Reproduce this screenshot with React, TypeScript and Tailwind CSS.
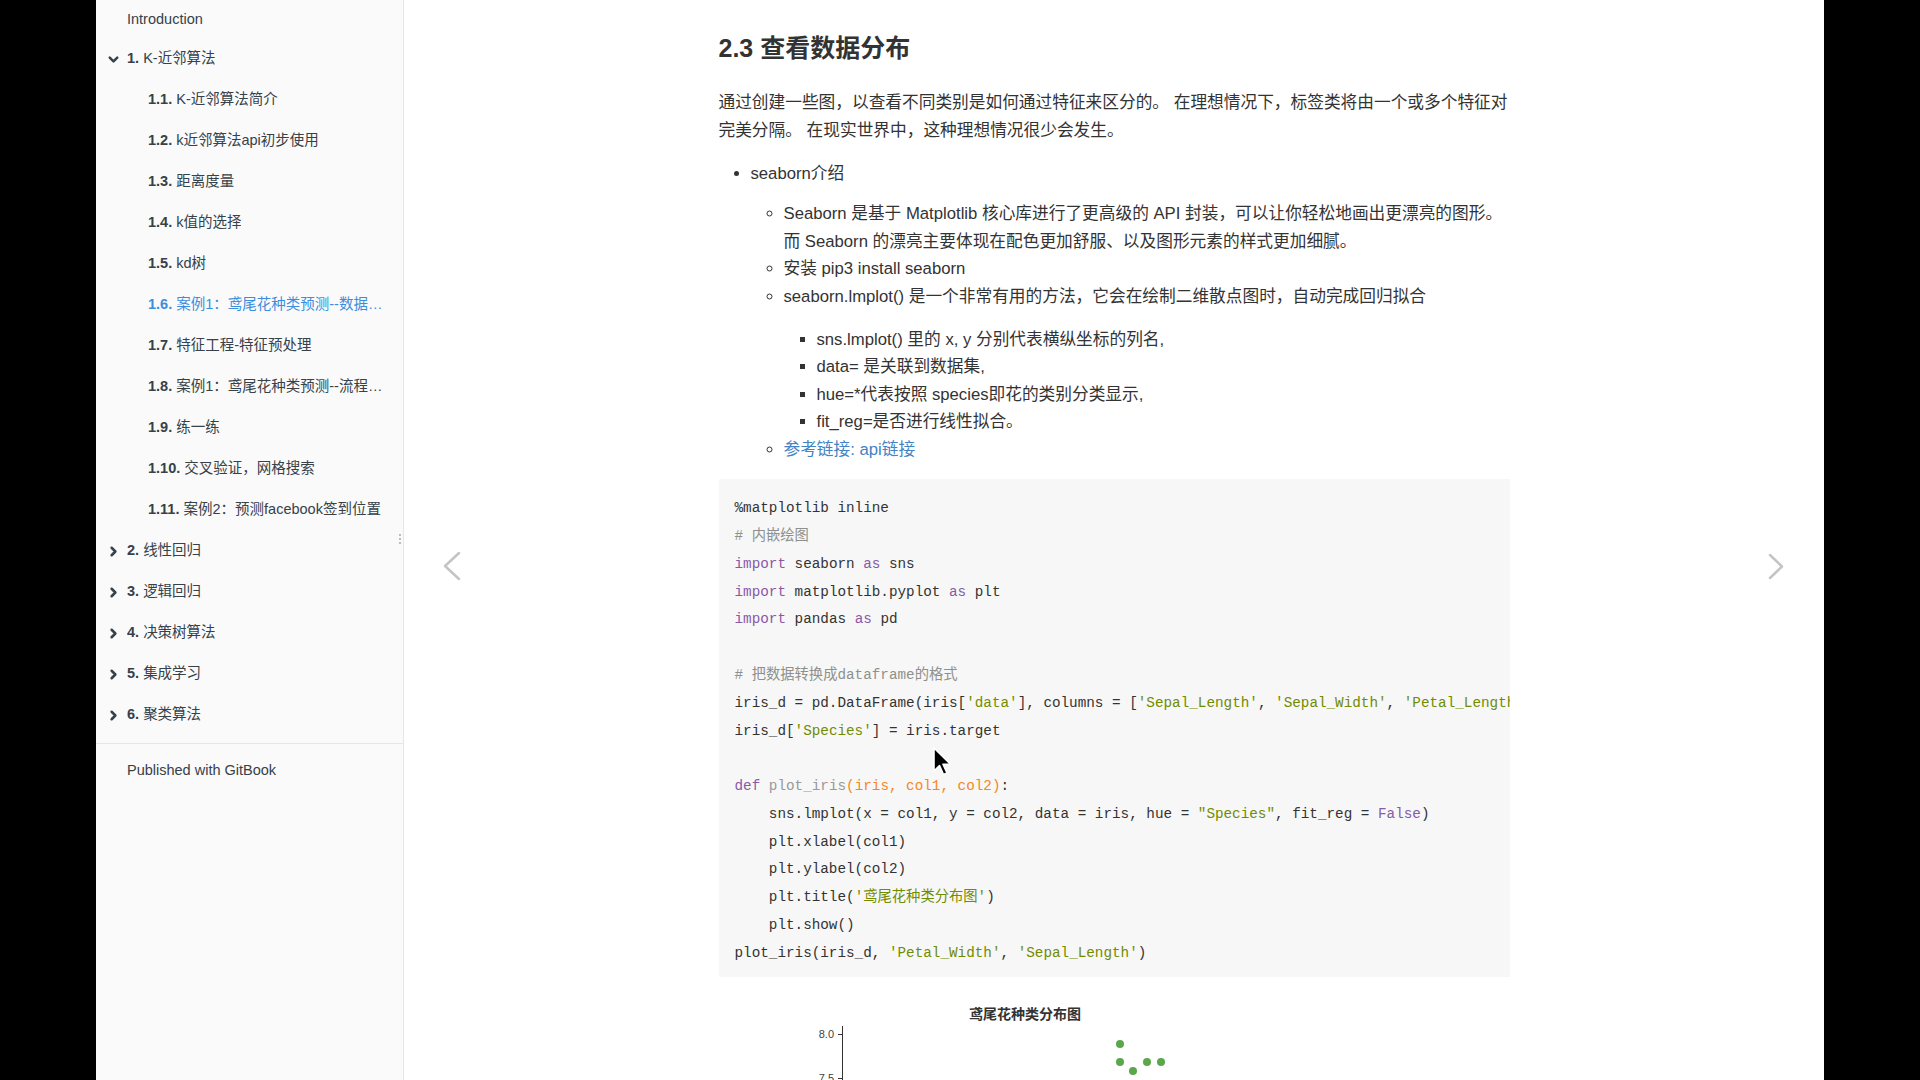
import React from "react";
import { ChevronDown, ChevronRight } from "lucide-react";

const sans = '"Liberation Sans", "Noto Sans CJK SC", sans-serif';
const mono = '"Liberation Mono", "Noto Sans CJK SC", monospace';

type Item = { num?: string; label: string; level: 0 | 1; chevron?: "down" | "right"; active?: boolean };

const items: Item[] = [
  { label: "Introduction", level: 0 },
  { num: "1.", label: "K-近邻算法", level: 0, chevron: "down" },
  { num: "1.1.", label: "K-近邻算法简介", level: 1 },
  { num: "1.2.", label: "k近邻算法api初步使用", level: 1 },
  { num: "1.3.", label: "距离度量", level: 1 },
  { num: "1.4.", label: "k值的选择", level: 1 },
  { num: "1.5.", label: "kd树", level: 1 },
  { num: "1.6.", label: "案例1：鸢尾花种类预测--数据集介绍", level: 1, active: true },
  { num: "1.7.", label: "特征工程-特征预处理", level: 1 },
  { num: "1.8.", label: "案例1：鸢尾花种类预测--流程实现", level: 1 },
  { num: "1.9.", label: "练一练", level: 1 },
  { num: "1.10.", label: "交叉验证，网格搜索", level: 1 },
  { num: "1.11.", label: "案例2：预测facebook签到位置", level: 1 },
  { num: "2.", label: "线性回归", level: 0, chevron: "right" },
  { num: "3.", label: "逻辑回归", level: 0, chevron: "right" },
  { num: "4.", label: "决策树算法", level: 0, chevron: "right" },
  { num: "5.", label: "集成学习", level: 0, chevron: "right" },
  { num: "6.", label: "聚类算法", level: 0, chevron: "right" },
];

const K = ({ c }: { c: string }) => <span className="text-[#8959a8]">{c}</span>;
const S = ({ c }: { c: string }) => <span className="text-[#718c00]">{c}</span>;
const C = ({ c }: { c: string }) => <span className="text-[#8e908c]">{c}</span>;
const P = ({ c }: { c: string }) => <span className="text-[#f5871f]">{c}</span>;

function Sidebar() {
  return (
    <nav className="relative w-[308px] shrink-0 bg-[#fafafa] border-r border-[#e6e6e6] text-[#364149] text-[14.5px]" style={{ fontFamily: sans }}>
      <ul className="mt-[-2.5px]">
        {items.map((it, i) => (
          <li
            key={i}
            className={`h-[41px] flex items-center pr-[15px] ${it.level === 1 ? "pl-[52px]" : "pl-[10px]"} ${i === 0 ? "pt-[3px]" : ""} ${it.active ? "text-[#3a8ee0]" : ""}`}
          >
            {it.level === 0 && (
              <span className="w-[21px] shrink-0 flex items-center">
                {it.chevron === "down" && <ChevronDown size={15} strokeWidth={4} />}
                {it.chevron === "right" && <ChevronRight size={15} strokeWidth={4} />}
              </span>
            )}
            <span className="truncate">
              {it.num && <b className="font-bold">{it.num}</b>} {it.label}
            </span>
          </li>
        ))}
        <li className="h-px bg-[#e6e6e6] my-[7px]"></li>
        <li className="h-[41px] flex items-center pl-[31px]">Published with GitBook</li>
      </ul>
      <div className="absolute right-[2px] top-[534px] flex flex-col gap-[2px]">
        <span className="block w-[2px] h-[2px] bg-[#bdbdbd]"></span>
        <span className="block w-[2px] h-[2px] bg-[#bdbdbd]"></span>
        <span className="block w-[2px] h-[2px] bg-[#bdbdbd]"></span>
      </div>
    </nav>
  );
}

function Code() {
  return (
    <pre
      className="mt-[15px] bg-[#f7f7f7] pl-[16px] pt-[16.5px] pb-[9.5px] overflow-hidden whitespace-pre text-[14.3px] leading-[27.8px] text-[#333]"
      style={{ fontFamily: mono }}
    >
      <div>%matplotlib inline</div>
      <div><C c="# 内嵌绘图" /></div>
      <div><K c="import" /> seaborn <K c="as" /> sns</div>
      <div><K c="import" /> matplotlib.pyplot <K c="as" /> plt</div>
      <div><K c="import" /> pandas <K c="as" /> pd</div>
      <div>&nbsp;</div>
      <div><C c="# 把数据转换成dataframe的格式" /></div>
      <div>iris_d = pd.DataFrame(iris[<S c="'data'" />], columns = [<S c="'Sepal_Length'" />, <S c="'Sepal_Width'" />, <S c="'Petal_Length'" />, <S c="'Petal_Width'" />])</div>
      <div>iris_d[<S c="'Species'" />] = iris.target</div>
      <div>&nbsp;</div>
      <div><K c="def" /> <span className="text-[#999]">plot_iris</span><P c="(iris, col1, col2)" />:</div>
      <div>    sns.lmplot(x = col1, y = col2, data = iris, hue = <S c={'"Species"'} />, fit_reg = <K c="False" />)</div>
      <div>    plt.xlabel(col1)</div>
      <div>    plt.ylabel(col2)</div>
      <div>    plt.title(<S c="'鸢尾花种类分布图'" />)</div>
      <div>    plt.show()</div>
      <div>plot_iris(iris_d, <S c="'Petal_Width'" />, <S c="'Sepal_Length'" />)</div>
    </pre>
  );
}

function Chart() {
  return (
    <svg width="791" height="120" className="block mt-[14px]">
      <text x="306" y="28" textAnchor="middle" fontSize="14" fontWeight="bold" fill="#333" style={{ fontFamily: sans }}>
        鸢尾花种类分布图
      </text>
      <line x1="123.5" y1="35" x2="123.5" y2="120" stroke="#333" strokeWidth="1" />
      <line x1="119" y1="43.5" x2="123.5" y2="43.5" stroke="#333" strokeWidth="1" />
      <line x1="119" y1="87.5" x2="123.5" y2="87.5" stroke="#333" strokeWidth="1" />
      <text x="115" y="47" textAnchor="end" fontSize="11" fill="#444" style={{ fontFamily: sans }}>8.0</text>
      <text x="115" y="91" textAnchor="end" fontSize="11" fill="#444" style={{ fontFamily: sans }}>7.5</text>
      {[
        [401, 53],
        [401, 71],
        [428, 71],
        [442, 71],
        [414, 80],
      ].map(([x, y], i) => (
        <circle key={i} cx={x} cy={y} r="4" fill="#5aa74c" />
      ))}
    </svg>
  );
}

function Content() {
  return (
    <main className="relative flex-1 bg-white overflow-hidden">
      <div className="w-[791px] mx-auto text-[16.7px] leading-[27.6px] text-[#333]" style={{ fontFamily: sans }}>
        <h2 className="mt-[33px] text-[25px] leading-[30px] font-bold">2.3 查看数据分布</h2>
        <p className="mt-[26px] whitespace-nowrap">
          通过创建一些图，以查看不同类别是如何通过特征来区分的。 在理想情况下，标签类将由一个或多个特征对
          <br />
          完美分隔。 在现实世界中，这种理想情况很少会发生。
        </p>
        <ul className="mt-[15.5px] pl-[32px] list-disc">
          <li>
            seaborn介绍
            <ul className="mt-[13px] pl-[33px] list-[circle]">
              <li className="whitespace-nowrap">
                Seaborn 是基于 Matplotlib 核心库进行了更高级的 API 封装，可以让你轻松地画出更漂亮的图形。
                <br />
                而 Seaborn 的漂亮主要体现在配色更加舒服、以及图形元素的样式更加细腻。
              </li>
              <li>安装 pip3 install seaborn</li>
              <li>
                seaborn.lmplot() 是一个非常有用的方法，它会在绘制二维散点图时，自动完成回归拟合
                <ul className="mt-[15px] pl-[33px] list-[square]">
                  <li>sns.lmplot() 里的 x, y 分别代表横纵坐标的列名,</li>
                  <li>data= 是关联到数据集,</li>
                  <li>hue=*代表按照 species即花的类别分类显示,</li>
                  <li>fit_reg=是否进行线性拟合。</li>
                </ul>
              </li>
              <li>
                <a className="text-[#4183c4]">参考链接: api链接</a>
              </li>
            </ul>
          </li>
        </ul>
        <Code />
        <Chart />
      </div>
      <svg className="absolute left-[38px] top-[551px]" width="20" height="30" viewBox="0 0 20 30">
        <polyline points="17,2 3,15 17,28" fill="none" stroke="#c4c4c4" strokeWidth="2.5" strokeLinecap="round" strokeLinejoin="round" />
      </svg>
      <svg className="absolute left-[1364px] top-[553px]" width="16" height="28" viewBox="0 0 16 28">
        <polyline points="2,2 14,13.5 2,25" fill="none" stroke="#c4c4c4" strokeWidth="2.5" strokeLinecap="round" strokeLinejoin="round" />
      </svg>
    </main>
  );
}

export default function App() {
  return (
    <div className="relative flex h-[1080px] w-[1920px] overflow-hidden bg-black">
      <div className="w-[96px] shrink-0 bg-black"></div>
      <Sidebar />
      <Content />
      <div className="w-[96px] shrink-0 bg-black"></div>
      <svg className="absolute left-[932px] top-[746px]" width="26" height="34" viewBox="0 0 26 34">
        <path d="M2 2 L2 25 L7.5 19.5 L11.5 28.5 L15 27 L11 18.2 L18.5 18.2 Z" fill="#000" stroke="#fff" strokeWidth="1.6" strokeLinejoin="round" />
      </svg>
    </div>
  );
}
